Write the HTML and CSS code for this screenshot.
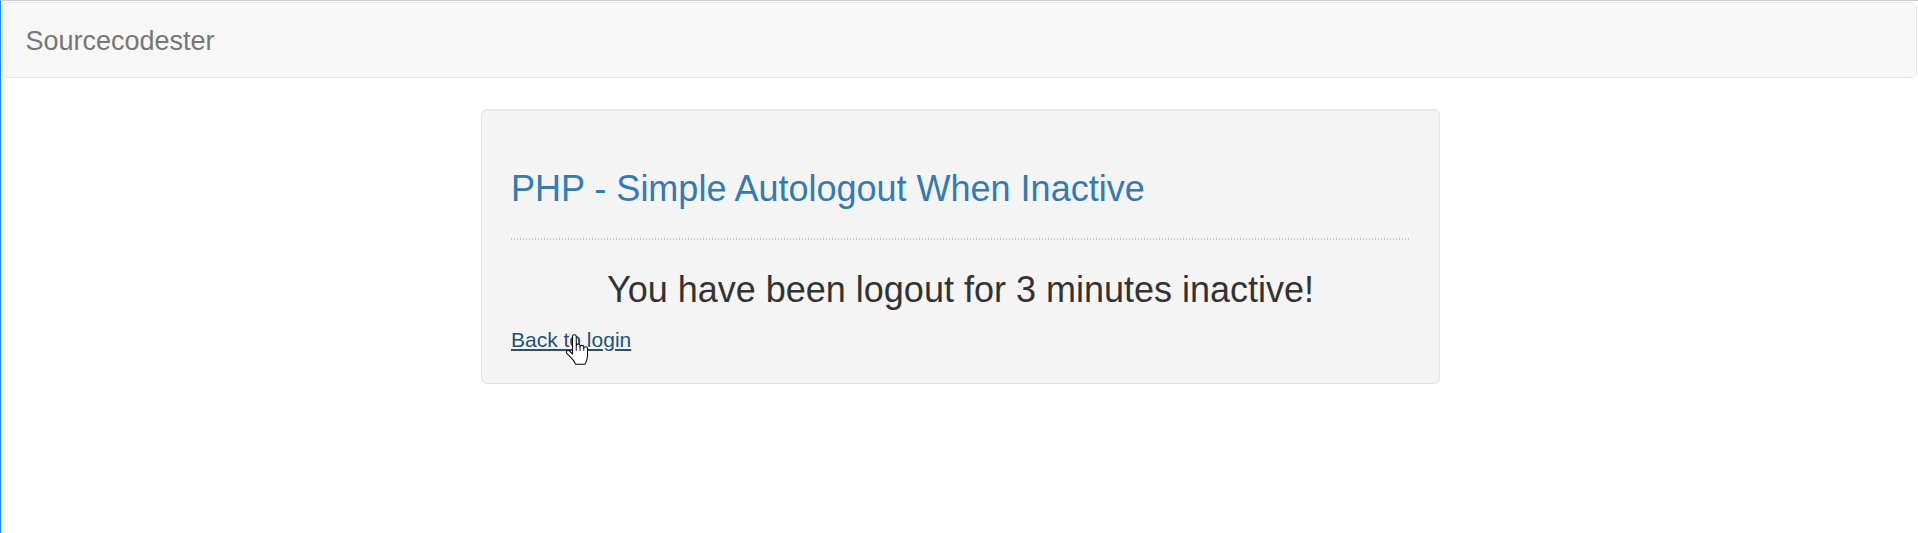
FILE: index.html
```html
<!DOCTYPE html>
<html lang="en">
<head>
    <meta charset="UTF-8">
    <title>PHP - Simple Autologout When Inactive</title>
    <link rel="stylesheet" href="styles.css">
</head>
<body>
    <div class="page">
        <nav class="navbar">
            <a class="navbar-brand" href="https://sourcecodester.com">Sourcecodester</a>
        </nav>

        <div class="well">
            <h3 class="title">PHP - Simple Autologout When Inactive</h3>
            <hr>
            <h3 class="message">You have been logout for 3 minutes inactive!</h3>
            <div class="back">
                <a href="index.php">Back to login</a>
                <svg class="cursor" width="25" height="31" viewBox="0 0 20 24" preserveAspectRatio="none">
                    <path d="M6 2 Q6 0.5 7.5 0.5 Q9 0.5 9 2 L9 9 Q9 7.8 10.5 7.8 Q12 7.8 12 9 L12 9.8 Q12 8.8 13.5 8.8 Q15 8.8 15 10 L15 10.8 Q15 9.8 16.5 9.8 Q18 9.8 18 11.2 L18 17 Q18 20 16 23.5 L8.5 23.5 Q7.5 21 5 18.5 L1.5 15 Q0.5 13.8 1.6 13 Q2.8 12.3 4.2 13.6 L6 15.5 Z" fill="#fff" stroke="#000" stroke-width="0.8" stroke-linejoin="round"/>
                    <path d="M9 9 L9 13 M12 9.8 L12 13 M15 10.8 L15 13" stroke="#000" stroke-width="0.7" fill="none"/>
                </svg>
            </div>
        </div>
    </div>
</body>
</html>
```

FILE: styles.css
```css
html, body {
    margin: 0;
    padding: 0;
    background: #fff;
}

body {
    font-family: "Liberation Sans", Arial, Helvetica, sans-serif;
    font-size: 21px;
    line-height: 1.42857;
    color: #333;
}

.page {
    min-height: 532px;
    border-top: 1px solid #cfcfcf;
    border-left: 1px solid #1a8cff;
    padding: 1px 1px 0 1px;
}

.navbar {
    height: 74px;
    background-color: #f8f8f8;
    border: 1px solid #e7e7e7;
    border-radius: 6px;
    display: flex;
    align-items: flex-start;
}

.navbar-brand {
    padding: 22.5px;
    font-size: 27px;
    line-height: 30px;
    color: #777;
    text-decoration: none;
}

.well {
    width: 899px;
    margin: 31px auto 0;
    position: relative;
    left: 1px;
    padding: 28.5px 29px;
    background-color: #f5f5f5;
    border: 1px solid #e3e3e3;
    border-radius: 6px;
    box-shadow: inset 0 1px 1px rgba(0,0,0,0.05);
}

h3 {
    font-size: 36px;
    font-weight: 500;
    line-height: 1.1;
    margin: 30px 0 15px;
}

.title {
    color: #337ab7;
}

hr {
    height: 2px;
    margin: 30px 0 29px;
    border: 0;
    background: repeating-linear-gradient(to right, #c8c8c8 0, #c8c8c8 1.5px, transparent 1.5px, transparent 3px);
}

.message {
    text-align: center;
    color: #333;
}

.back {
    position: relative;
}

.back a {
    color: #23527c;
    text-decoration: underline;
}

.cursor {
    position: absolute;
    left: 54px;
    top: 9px;
}
```
